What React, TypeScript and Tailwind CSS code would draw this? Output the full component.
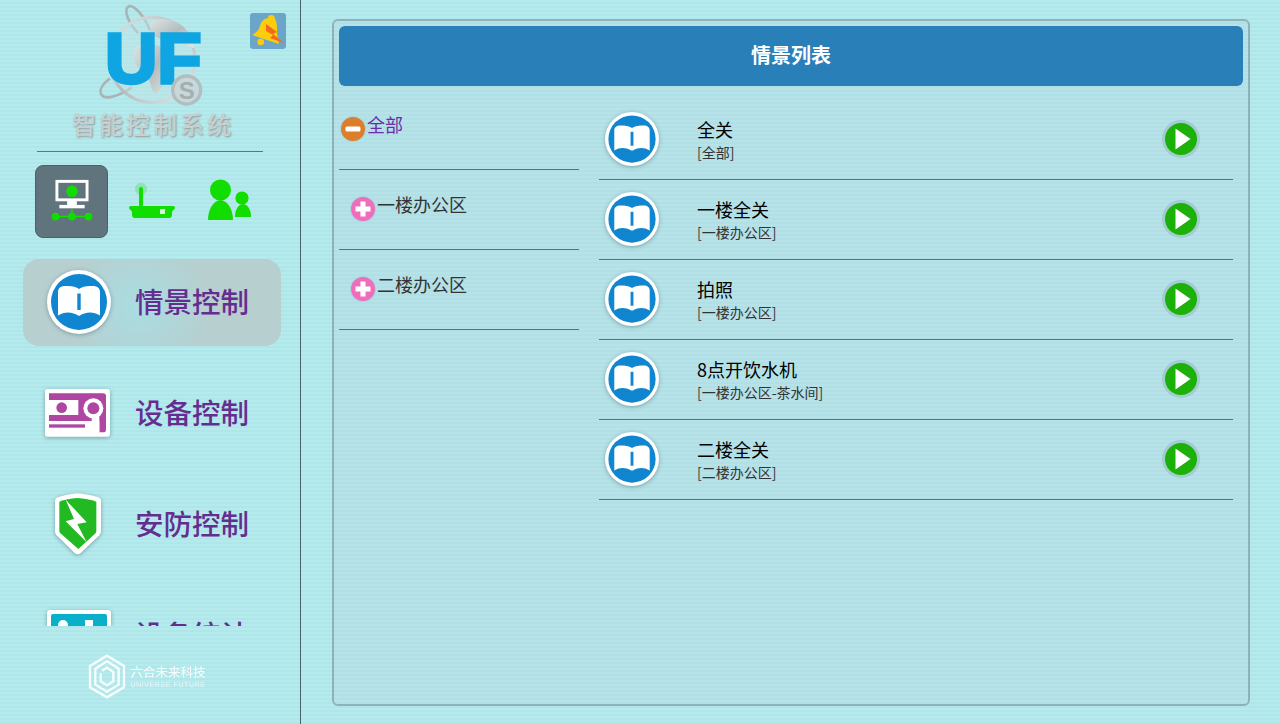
const cjk = "font-['Noto_Sans_CJK_SC','Noto_Sans',sans-serif]"

const BookIcon = ({ size }: { size: number }) => (
    <svg width={size} height={size} viewBox="0 0 64 64" className="shrink-0 drop-shadow-[0_1px_2px_rgba(60,90,100,0.45)]">
        <circle cx="32" cy="32" r="32" fill="#fff" />
        <circle cx="32" cy="32" r="28" fill="#1085d0" />
        <path
            d="M11 22C11 18 14 16 18 16C24 15.5 29 16.5 32 19C35 16.5 40 15.5 46 16C50 16 53 18 53 22V45.5C46 41 38 42 32 46C26 42 18 41 11 45.5Z"
            fill="#fff"
        />
        <rect x="30.3" y="23.5" width="3.4" height="16.5" fill="#1085d0" />
    </svg>
)

const PlayIcon = () => (
    <svg width="38" height="38" viewBox="0 0 38 38" className="shrink-0">
        <circle cx="19" cy="19" r="19" fill="#a3cbd0" />
        <circle cx="19" cy="19" r="16" fill="#1bb108" />
        <path d="M13.5 8.5L28.5 19L13.5 29.5Z" fill="#fff" />
    </svg>
)

const MinusIcon = () => (
    <svg width="26" height="26" viewBox="0 0 26 26" className="shrink-0">
        <circle cx="13" cy="13" r="13" fill="#a6d9e0" />
        <circle cx="13" cy="13" r="12" fill="#dc7e2a" />
        <rect x="5.5" y="10.5" width="15" height="5" rx="1.5" fill="#fff" />
    </svg>
)

const PlusIcon = () => (
    <svg width="26" height="26" viewBox="0 0 26 26" className="shrink-0">
        <circle cx="13" cy="13" r="13" fill="#a6d9e0" />
        <circle cx="13" cy="13" r="12" fill="#ee6ebc" />
        <path d="M10.5 5.5H15.5V10.5H20.5V15.5H15.5V20.5H10.5V15.5H5.5V10.5H10.5Z" fill="#fff" />
    </svg>
)

// drawn in the 3x crop's coordinates, hence the big viewBox
const Logo = () => (
    <svg width="115" height="110" viewBox="0 0 345 330" className="shrink-0">
        <defs>
            <linearGradient id="silver" x1="0" y1="0" x2="1" y2="1">
                <stop offset="0" stopColor="#dfe5e5" />
                <stop offset="0.5" stopColor="#b4bcbe" />
                <stop offset="1" stopColor="#e3e8e8" />
            </linearGradient>
        </defs>
        <path
            d="M165 92C150 50 115 10 100 20C85 30 100 70 130 100M45 235C25 250 10 270 20 285C30 300 70 290 110 262"
            fill="none"
            stroke="#aab4b7"
            strokeWidth="8"
        />
        <circle cx="172" cy="180" r="128" fill="#bfe4e6" fillOpacity="0.5" stroke="url(#silver)" strokeWidth="9" />
        <path d="M165 70C195 50 240 55 270 85C285 100 295 120 298 145L255 130L205 120L170 105Z" fill="url(#silver)" />
        <path d="M125 140C150 125 190 130 215 150C240 180 245 215 215 240C200 260 190 285 180 280C165 270 170 240 150 225C120 200 105 170 125 140Z" fill="url(#silver)" />
        <text
            x="30"
            y="248"
            fontFamily="Liberation Sans, sans-serif"
            fontWeight="700"
            fontSize="211"
            textLength="290"
            lengthAdjust="spacingAndGlyphs"
            fill="#0ea5e2"
            stroke="#0ea5e2"
            strokeWidth="10"
        >
            UF
        </text>
        <circle cx="275" cy="270" r="42" fill="#c6d8da" stroke="#b3bcbe" strokeWidth="10" />
        <text x="275" y="296" textAnchor="middle" fontFamily="Liberation Sans, sans-serif" fontWeight="700" fontSize="72" fill="#a4afb1">
            S
        </text>
    </svg>
)

const Bell = () => (
    <svg viewBox="0 0 36 36" className="w-9 h-9">
        <rect width="36" height="36" rx="3" fill="#6ba6c9" />
        <path d="M21 2C24 2 25 4 25 6C27 9 27 14 27 18C27 23 28 27 29 31L2 22C6 20 9 17 10 13C11 9 13 6 18 5C18 3 19 2 21 2Z" fill="#fdcc0c" />
        <circle cx="10.7" cy="29" r="3.3" fill="#fdcc0c" />
        <path d="M16 11L27 19L23 21L34 30L20 25L23 22L16 18Z" fill="#f26a1b" />
    </svg>
)

const NetworkIcon = () => (
    <svg width="73" height="73" viewBox="0 0 73 73">
        <rect x="21.5" y="15.8" width="31" height="19" fill="none" stroke="#fff" strokeWidth="3" />
        <circle cx="37" cy="26" r="6" fill="#12dd00" />
        <rect x="32" y="36" width="10" height="5" fill="#fff" />
        <rect x="24" y="40" width="26" height="3.5" fill="#fff" />
        <path d="M37 44V52M20 52H54" stroke="#12dd00" strokeWidth="1.6" />
        <circle cx="20" cy="52" r="4" fill="#12dd00" />
        <circle cx="37" cy="52" r="4" fill="#12dd00" />
        <circle cx="54" cy="52" r="4" fill="#12dd00" />
    </svg>
)

const RouterIcon = () => (
    <svg width="50" height="37" viewBox="0 0 50 37">
        <circle cx="14" cy="6" r="6" fill="#12dd00" opacity="0.25" />
        <rect x="12" y="4" width="4" height="20" rx="2" fill="#12dd00" />
        <path d="M4 23H46C48 23 48.5 25 47.5 26L45 28.5V32C45 34 44 35 42 35H8C6 35 5 34 5 32V28.5L2.5 26C1.5 25 2 23 4 23Z" fill="#12dd00" />
        <rect x="33" y="26" width="5" height="5" fill="#d8f5e0" />
    </svg>
)

const UsersIcon = () => (
    <svg width="46" height="44" viewBox="0 0 46 44">
        <circle cx="13.5" cy="12" r="10.5" fill="#12dd00" />
        <path d="M1 42C1 33 5 23 13.5 22C22 23 26 33 26 42Z" fill="#12dd00" />
        <circle cx="35" cy="20" r="6.6" fill="#12dd00" />
        <path d="M28 39C28 33 30 27 36 26C42 27 44 33 44 39Z" fill="#12dd00" />
    </svg>
)

const CardIcon = () => (
    <svg width="75" height="55" viewBox="0 0 225 165" className="-ml-[4px] -mt-[2px] drop-shadow-[0_1px_2px_rgba(60,90,100,0.5)]">
        <rect x="15" y="12" width="195" height="143" rx="8" fill="#fff" />
        <path d="M27 25H190C195 25 198 28 198 33V134C198 139 195 142 190 142H178V108H27Z" fill="#af46a1" />
        <rect x="27" y="45" width="88" height="45" fill="#fff" />
        <circle cx="65" cy="68" r="16" fill="#af46a1" />
        <circle cx="160" cy="70" r="30" fill="#fff" />
        <circle cx="160" cy="70" r="18" fill="#af46a1" />
        <rect x="155" y="90" width="23" height="52" fill="#fff" />
        <rect x="27" y="118" width="108" height="10" fill="#af46a1" />
    </svg>
)

const ShieldIcon = () => (
    <svg width="70" height="70" viewBox="0 0 210 210" className="drop-shadow-[0_1px_2px_rgba(60,90,100,0.5)]">
        <path d="M100 13C125 15 150 20 165 26C169 28 171 31 171 36V125C171 132 168 137 163 142L110 192C104 197 98 197 92 192L41 142C36 137 33 132 33 125V36C33 31 35 28 39 26C54 20 75 15 100 13Z" fill="#fff" />
        <path d="M100 27C120 28 140 32 157 38V125C157 129 156 131 153 134L103 180L51 134C48 131 46 129 46 125V38C62 32 80 28 100 27Z" fill="#22b922" />
        <path d="M65 32L128 100L100 105L128 160L65 97L90 90Z" fill="#fff" />
    </svg>
)

const StatsIcon = () => (
    <svg width="64" height="50" viewBox="0 0 64 50" className="-ml-[1px] drop-shadow-[0_1px_2px_rgba(60,90,100,0.5)]">
        <rect width="64" height="48" rx="3" fill="#fff" />
        <rect x="4" y="4" width="56" height="40" rx="2" fill="#0aafc9" />
        <circle cx="16" cy="15" r="5" fill="#fff" />
        <rect x="38" y="10" width="8" height="6" fill="#fff" />
    </svg>
)

const HexLogo = () => (
    <svg width="38" height="45" viewBox="0 0 114 135" fill="none" stroke="#fff" className="shrink-0 opacity-90">
        <path d="M57 5L108 36V100L57 130L6 100V36Z" strokeWidth="7" />
        <path d="M57 22L92 44V92L57 113L22 92V44Z" strokeWidth="7" />
        <path d="M42 50L57 41L76 54V82L57 94L38 82V58" strokeWidth="7" />
    </svg>
)

const navItems = [
    { label: "情景控制", icon: <BookIcon size={64} />, active: true },
    { label: "设备控制", icon: <CardIcon />, active: false },
    { label: "安防控制", icon: <ShieldIcon />, active: false },
    { label: "设备统计", icon: <StatsIcon />, active: false },
]

const areas = [
    { label: "全部", open: true },
    { label: "一楼办公区", open: false },
    { label: "二楼办公区", open: false },
]

const scenes = [
    { name: "全关", area: "[全部]" },
    { name: "一楼全关", area: "[一楼办公区]" },
    { name: "拍照", area: "[一楼办公区]" },
    { name: "8点开饮水机", area: "[一楼办公区-茶水间]" },
    { name: "二楼全关", area: "[二楼办公区]" },
]

const App = () => {
    return (
        <div className={`${cjk} w-[1280px] h-[724px] overflow-hidden flex bg-[repeating-linear-gradient(0deg,#afe6e9_0px,#afe6e9_2px,#b5ebed_2px,#b5ebed_4px)]`}>
            <div className="relative w-[301px] shrink-0 h-full border-r border-[#46626a] flex flex-col">
                <div className="absolute top-[13px] left-[250px]">
                    <Bell />
                </div>
                <div className="h-[106px] pl-[95px]">
                    <Logo />
                </div>
                <div className="h-[36px] pl-[6px] flex items-center justify-center text-[24px] leading-[36px] tracking-[3px] font-medium text-[#c8d0d1] [text-shadow:1px_1px_2px_#8c9698]">
                    智能控制系统
                </div>
                <div className="mx-[37px] mt-[9px] h-px bg-[#5f777c]" />
                <div className="mt-[13px] ml-[35px] flex gap-[6px]">
                    <div className="w-[73px] h-[73px] rounded-lg bg-[#5f747c] border border-[#4f6168] flex items-center justify-center">
                        <NetworkIcon />
                    </div>
                    <div className="w-[73px] h-[73px] flex items-center justify-center pl-[3px]">
                        <RouterIcon />
                    </div>
                    <div className="w-[73px] h-[73px] flex items-center justify-center pb-[3px]">
                        <UsersIcon />
                    </div>
                </div>
                <div className="mt-[21px] h-[367px] overflow-hidden px-[23px] flex flex-col gap-[24px]">
                    {navItems.map((item) => (
                        <div
                            key={item.label}
                            className={`h-[87px] shrink-0 w-[258px] rounded-2xl flex items-center ${item.active ? "bg-[radial-gradient(circle_at_45%_55%,#a9dde3_0px,#b7cfcf_70px)]" : ""}`}
                        >
                            <div className="w-[113px] shrink-0 flex justify-center pr-[1px] pb-[1px]">{item.icon}</div>
                            <div className="-ml-[1px] text-[28.5px] leading-[40px] pb-[3px] font-medium text-[#662d91] whitespace-nowrap">{item.label}</div>
                        </div>
                    ))}
                </div>
                <div className="flex-1 flex items-center justify-center gap-[4px] pr-[6px] pt-[2px]">
                    <HexLogo />
                    <div className="flex flex-col text-white">
                        <div className="text-[12.5px] leading-[16px] opacity-90 whitespace-nowrap">六合未来科技</div>
                        <div className="text-[7px] leading-[9px] tracking-[0.6px] opacity-70 font-['Liberation_Sans',sans-serif] whitespace-nowrap">UNIVERSE FUTURE</div>
                    </div>
                </div>
            </div>
            <div className="flex-1 pl-[31px] pt-[19px]">
                <div className="w-[918px] h-[687px] rounded-md border-[2px] border-[#8fb1ba] p-[5px] bg-[repeating-linear-gradient(0deg,#b1dfe6_0px,#b1dfe6_2px,#b6e2e8_2px,#b6e2e8_4px)]">
                    <div className="h-[60px] pb-[2px] rounded-md bg-[#2980b9] flex items-center justify-center text-[20px] font-bold text-white">
                        情景列表
                    </div>
                    <div className="flex mt-[4px]">
                        <div className="w-[240px] shrink-0">
                            {areas.map((area) => (
                                <div
                                    key={area.label}
                                    className={`h-[80px] border-b border-[#5d7177] flex items-start pt-[21px] ${area.open ? "pl-[1px]" : "pl-[11px]"}`}
                                >
                                    <div className="mt-[5px]">{area.open ? <MinusIcon /> : <PlusIcon />}</div>
                                    <span className={`ml-[1px] text-[18px] leading-[26px] ${area.open ? "text-[#6a2ea6]" : "text-[#333]"}`}>{area.label}</span>
                                </div>
                            ))}
                        </div>
                        <div className="ml-[20px] w-[634px] mt-[10px]">
                            {scenes.map((scene) => (
                                <div key={scene.name} className="h-[80px] border-b border-[#5d7177] flex items-center">
                                    <div className="w-[98px] shrink-0 pl-[6px] pb-[2px]">
                                        <BookIcon size={54} />
                                    </div>
                                    <div className="flex-1 pb-[1px]">
                                        <div className="text-[18px] leading-[24px] mb-[1px] text-black">{scene.name}</div>
                                        <div className="text-[14px] leading-[20px] text-[#333]">{scene.area}</div>
                                    </div>
                                    <div className="mr-[33px] pb-[2px]">
                                        <PlayIcon />
                                    </div>
                                </div>
                            ))}
                        </div>
                    </div>
                </div>
            </div>
        </div>
    )
}

export default App
